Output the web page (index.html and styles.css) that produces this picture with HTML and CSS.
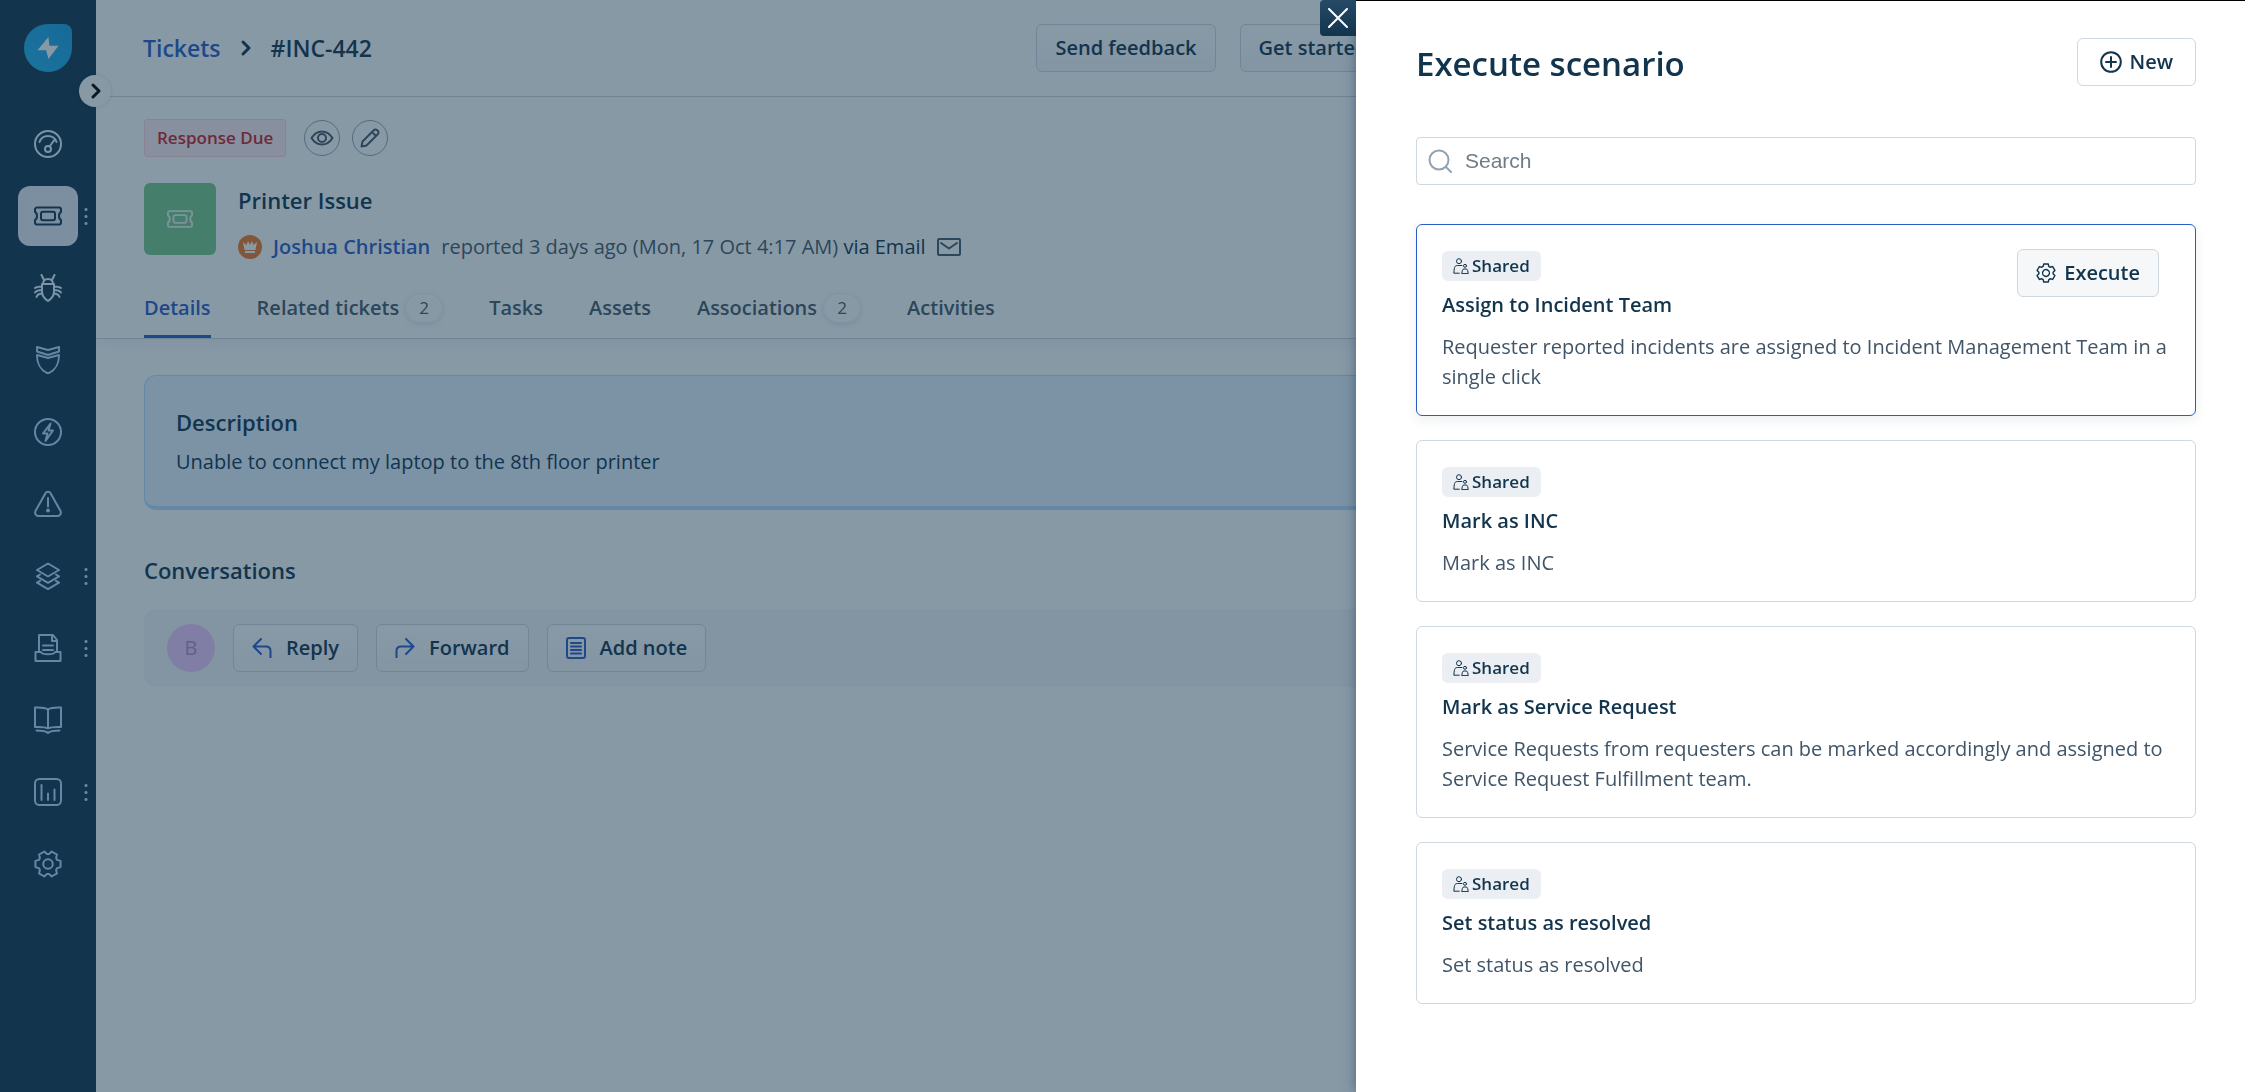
FILE: index.html
```html
<!DOCTYPE html>
<html lang="en">
<head>
<meta charset="utf-8">
<meta name="viewport" content="width=device-width, initial-scale=1">
<title>#INC-442 Printer Issue</title>
<link rel="stylesheet" href="styles.css">
</head>
<body>
<svg width="0" height="0" class="sprite" aria-hidden="true">
  <symbol id="i-ticket" viewBox="0 0 28 28"><path d="M3 5.500h22a2 2 0 0 1 2 2v2.500c-2.600 1-2.600 7 0 8v2.500a2 2 0 0 1-2 2H3a2 2 0 0 1-2-2V18c2.600-1 2.600-7 0-8V7.500a2 2 0 0 1 2-2z"/><rect x="7" y="9.800" width="14" height="8.400" rx="2"/></symbol>
  <symbol id="i-gear" viewBox="0 0 28 28"><path d="M26.600 10.900v6.200l-3.500 1-1 1.800.9 3.500-5.400 3.100-2.600-2.600h-2l-2.600 2.600L5 23.400l.9-3.500-1-1.800-3.500-1v-6.200l3.500-1 1-1.800L5 4.600l5.400-3.100L13 4.100h2l2.600-2.600L23 4.600l-.9 3.500 1 1.800z"/><circle cx="14" cy="14" r="4.800"/></symbol>
  <symbol id="i-shared" viewBox="0 0 16 16"><circle cx="6" cy="3.200" r="2.500"/><path d="M9 7.500H4.500c-2.200 0-3 1.500-3.200 3.200L.8 15.200h5.500"/><circle cx="12" cy="7.800" r="1.500"/><path d="M8.800 15.200l.6-2.900c.2-.9.800-1.300 1.600-1.300h2c.8 0 1.400.4 1.600 1.300l.6 2.900z"/></symbol>
</svg>

<div class="app">
  <aside class="sidebar">
    <a href="#" class="logo" aria-label="Home"><svg viewBox="0 0 24 26" width="22" height="24"><path d="M12.500 1L.5 15.500H10L12.500 25 23.500 10.500h-10z"/></svg></a>
    <button class="expand" aria-label="Expand menu"><svg width="12" height="16" viewBox="0 0 12 16"><path d="M4 2l6 6-6 6"/></svg></button>
    <nav class="nav" aria-label="Main">
      <a href="#" class="nav-item bright" aria-label="Dashboard"><svg viewBox="0 0 28 28"><circle cx="14" cy="14" r="13"/><path d="M5.500 12a9 9 0 0 1 17 0M20 10.500l-4.500 6"/><circle cx="14" cy="19" r="3"/></svg></a>
      <a href="#" class="nav-item active more" aria-label="Tickets"><svg><use href="#i-ticket"/></svg></a>
      <a href="#" class="nav-item bright" aria-label="Problems"><svg viewBox="0 0 28 28"><path d="M8 10h12v8c0 4-3 7-6 9-3-2-6-5-6-9zM9 10c0-3 2-5 5-5s5 2 5 5M10 6L7.500 1M18 6l2.500-5M8 12.500c-3 0-5 0-7 1.500M8 16c-3 0-5 0-7 2.500M8.500 19.500c-3 0-5 .5-6 3.500M20 12.500c3 0 5 0 7 1.500M20 16c3 0 5 0 7 2.500M19.500 19.500c3 0 5 .5 6 3.500"/></svg></a>
      <a href="#" class="nav-item" aria-label="Changes"><svg viewBox="0 0 28 28"><path d="M3 1l11 3 11-3v4.500L14 9 3 5.500zM3 9l11 3 11-3c0 10-3.500 15-11 18.500C6.500 24 3 19 3 9z"/></svg></a>
      <a href="#" class="nav-item" aria-label="Releases"><svg viewBox="0 0 28 28"><circle cx="14" cy="14" r="13"/><path d="M16.500 5.500l-7.500 10h4.500l-2 7.500L19 12.500h-4.500z"/></svg></a>
      <a href="#" class="nav-item" aria-label="Alerts"><svg viewBox="0 0 28 28"><path d="M11.300 3.500c1.200-2.200 4.200-2.200 5.400 0l9.700 17.300c1.300 2.300-.2 5.200-2.700 5.200H4.300c-2.500 0-4-2.900-2.700-5.200zM14 8v8.500"/><circle class="solid" cx="14" cy="20.500" r="1"/></svg></a>
      <a href="#" class="nav-item more" aria-label="Assets"><svg viewBox="0 0 28 28"><path d="M14 1.500L25 8l-11 6.500L3 8zM6 12.500L3 14.300l11 6.500 11-6.500-3-1.800M6 18.800l-3 1.800 11 6.500 11-6.500-3-1.800"/></svg></a>
      <a href="#" class="nav-item more" aria-label="Purchase orders"><svg viewBox="0 0 28 28"><path d="M5 17V1h14l4 5v11M18 1v6h5M9 11.500h10M9 16h10M1.500 18H7c1 3 13 3 14 0h5.500v9h-25z"/></svg></a>
      <a href="#" class="nav-item" aria-label="Solutions"><svg viewBox="0 0 28 28"><path d="M14 3.500C10.500 1 5 1.500 1 1.500V21c4 0 9.500-.5 13 1.500 3.500-2 9-1.500 13-1.500V1.500c-4 0-9.500-.5-13 2zM14 3.500v19M2.500 24.500c4 0 9 0 11.500 2.500 2.500-2.500 7.500-2.500 11.500-2.500"/></svg></a>
      <a href="#" class="nav-item more" aria-label="Analytics"><svg viewBox="0 0 28 28"><rect x="1" y="1" width="26" height="26" rx="4.500"/><path d="M7.500 7v15M14 15.500V22M20.500 11.500V22"/></svg></a>
      <a href="#" class="nav-item" aria-label="Admin"><svg><use href="#i-gear"/></svg></a>
    </nav>
  </aside>

  <main class="main">
    <header class="topbar">
      <nav class="crumbs" aria-label="Breadcrumb">
        <a href="#">Tickets</a>
        <svg width="12" height="18" viewBox="0 0 12 18"><path d="M3 3l6 6-6 6"/></svg>
        <span>#INC-442</span>
      </nav>
      <div class="top-actions">
        <button class="btn">Send feedback</button>
        <button class="btn">Get started</button>
      </div>
    </header>

    <section class="ticket-head">
      <div class="status-row">
        <span class="status">Response Due</span>
        <button class="round" aria-label="Watch"><svg width="24" height="24" viewBox="0 0 24 24"><path d="M1.500 12C4 8 7.500 5.500 12 5.500S20 8 22.500 12C20 16 16.500 18.500 12 18.500S4 16 1.500 12z"/><circle cx="12" cy="12" r="4"/></svg></button>
        <button class="round" aria-label="Edit"><svg width="20" height="20" viewBox="0 0 20 20"><path d="M1.500 18.500l1-5L14 2c2-2 6 2 4 4L6.500 17.500zM12 4l4 4"/></svg></button>
      </div>
      <div class="ticket">
        <div class="tile"><svg width="26" height="26"><use href="#i-ticket"/></svg></div>
        <div class="ticket-info">
          <h1>Printer Issue</h1>
          <div class="meta">
            <span class="vip"><svg width="14" height="12" viewBox="0 0 14 12"><path d="M0 1l3.500 3L5 0l2 4 2-4 1.500 4L14 1l-1.500 8h-11zM2 10h10v2H2z"/></svg></span>
            <a href="#">Joshua Christian</a>
            <span class="reported">reported 3 days ago (Mon, 17 Oct 4:17 AM) <span class="via">via Email</span></span>
            <svg class="mail" width="24" height="18" viewBox="0 0 24 18"><rect x="1" y="1" width="22" height="16" rx="1"/><path d="M4 5l8 5.500L20 5"/></svg>
          </div>
        </div>
      </div>
      <nav class="tabs" aria-label="Ticket sections">
        <a href="#" class="tab current">Details</a>
        <a href="#" class="tab">Related tickets <span class="count">2</span></a>
        <a href="#" class="tab">Tasks</a>
        <a href="#" class="tab">Assets</a>
        <a href="#" class="tab">Associations <span class="count">2</span></a>
        <a href="#" class="tab">Activities</a>
      </nav>
    </section>

    <div class="content">
      <section class="description">
        <h2>Description</h2>
        <p>Unable to connect my laptop to the 8th floor printer</p>
      </section>
      <h2 class="conv-title">Conversations</h2>
      <div class="composer">
        <span class="avatar">B</span>
        <button class="btn icon-btn"><svg width="20" height="20" viewBox="0 0 20 20"><path d="M9 1L1.500 8.500 9 16M1.500 8.500H14c3 0 4.500 1.500 4.500 4.500v6.500"/></svg>Reply</button>
        <button class="btn icon-btn"><svg width="20" height="20" viewBox="0 0 20 20"><path d="M11 1l7.500 7.500L11 16M18.500 8.500H6c-3 0-4.500 1.500-4.500 4.500v6.500"/></svg>Forward</button>
        <button class="btn icon-btn"><svg width="20" height="22" viewBox="0 0 20 22"><rect x="1" y="1" width="18" height="20" rx="2"/><path d="M5 6h10M5 9.500h10M5 13h10M5 16.500h10"/></svg>Add note</button>
      </div>
    </div>
  </main>
</div>

<div class="backdrop"></div>

<aside class="drawer" aria-label="Execute scenario">
  <button class="close" aria-label="Close"><svg width="20" height="20" viewBox="0 0 20 20"><path d="M1 1l18 18M19 1L1 19"/></svg></button>
  <header class="drawer-head">
    <h2>Execute scenario</h2>
    <button class="btn new"><svg width="22" height="22" viewBox="0 0 22 22"><circle cx="11" cy="11" r="9.800"/><path d="M11 6v10M6 11h10"/></svg>New</button>
  </header>
  <label class="search">
    <svg width="24" height="24" viewBox="0 0 24 24"><circle cx="11" cy="11" r="9.500"/><path d="M18 18l5 5"/></svg>
    <input type="text" placeholder="Search" aria-label="Search">
  </label>
  <ul class="scenarios">
    <li class="card selected">
      <span class="shared"><svg width="16" height="16"><use href="#i-shared"/></svg>Shared</span>
      <h3>Assign to Incident Team</h3>
      <p>Requester reported incidents are assigned to Incident Management Team in a single click</p>
      <button class="btn execute"><svg width="20" height="20" viewBox="0 0 28 28"><use href="#i-gear" width="28" height="28" transform="rotate(30 14 14)"/></svg>Execute</button>
    </li>
    <li class="card">
      <span class="shared"><svg width="16" height="16"><use href="#i-shared"/></svg>Shared</span>
      <h3>Mark as INC</h3>
      <p>Mark as INC</p>
    </li>
    <li class="card">
      <span class="shared"><svg width="16" height="16"><use href="#i-shared"/></svg>Shared</span>
      <h3>Mark as Service Request</h3>
      <p>Service Requests from requesters can be marked accordingly and assigned to Service Request Fulfillment team.</p>
    </li>
    <li class="card">
      <span class="shared"><svg width="16" height="16"><use href="#i-shared"/></svg>Shared</span>
      <h3>Set status as resolved</h3>
      <p>Set status as resolved</p>
    </li>
  </ul>
</aside>
</body>
</html>
```
FILE: styles.css
```css
:root {
  --ink: #12344d;
  --muted: #475867;
  --link: #2c5cc5;
  --line: #cfd7df;
}

* { box-sizing: border-box; }

body {
  margin: 0;
  font: 20px/30px "Open Sans", "Noto Sans", sans-serif;
  color: var(--ink);
  background: #fff;
}

h1, h2, h3, p, ul { margin: 0; padding: 0; }
ul { list-style: none; }
a { color: var(--link); text-decoration: none; }
button { font: inherit; color: inherit; cursor: pointer; }
svg { display: block; flex: none; fill: none; stroke: currentColor; stroke-width: 2; stroke-linejoin: round; stroke-linecap: round; }
.solid { fill: currentColor; }
.sprite { position: absolute; }

.app { display: flex; min-height: 100vh; overflow: hidden; }

/* Sidebar */
.sidebar {
  position: relative;
  flex: 0 0 96px;
  padding: 24px 18px;
  background: #12344d;
}
.logo {
  display: grid;
  place-items: center;
  width: 48px;
  height: 48px;
  margin: 0 6px 42px;
  border-radius: 50% 8px 50% 50%;
  background: linear-gradient(45deg, #24b4ee, #1c9fe0);
  color: #fff;
}
.logo svg { fill: currentColor; stroke: none; }
.expand {
  position: absolute;
  top: 75px;
  right: -15px;
  display: grid;
  place-items: center;
  width: 32px;
  height: 32px;
  padding: 0;
  border: 0;
  border-radius: 50%;
  background: #fff;
  color: #000;
  box-shadow: 0 0 4px rgba(0, 0, 0, .15);
}
.expand svg { stroke-width: 3; }
.nav { display: flex; flex-direction: column; gap: 12px; }
.nav-item {
  position: relative;
  display: grid;
  place-items: center;
  height: 60px;
  border-radius: 12px;
  color: #b4dafa;
}
.nav-item.bright { color: #e4f2ff; }
.nav-item svg { width: 28px; height: 28px; }
.nav-item.active { background: #e6eaf4; color: var(--ink); }
.more::after {
  content: "";
  position: absolute;
  right: -10px;
  width: 4px;
  height: 21px;
  background: radial-gradient(circle, #c4e0f8 1px, transparent 2px) 0 0 / 4px 7px;
}

/* Page header */
.main { flex: 1; min-width: 0; }
.topbar {
  display: grid;
  grid-template-columns: 10fr 13fr;
  padding: 24px 47px;
  border-bottom: 1px solid var(--line);
}
.crumbs { display: flex; align-items: center; gap: 19px; font-size: 23px; font-weight: 600; }
.crumbs svg { stroke-width: 3; }
.top-actions { display: flex; gap: 24px; }
.btn {
  display: inline-flex;
  align-items: center;
  justify-content: center;
  height: 48px;
  padding: 0 18px;
  border: 1px solid var(--line);
  border-radius: 6px;
  background: linear-gradient(#fff, #f5f7f9);
  font-weight: 600;
  white-space: nowrap;
}

/* Ticket summary */
.ticket-head {
  border-bottom: 1px solid var(--line);
  padding: 22px 48px 0;
  box-shadow: 0 6px 12px rgba(18, 52, 77, .06);
}
.status-row { display: flex; align-items: center; gap: 12px; }
.status {
  height: 38px;
  padding: 0 12px;
  margin-right: 6px;
  border: 1px solid #ffd0d6;
  border-radius: 3px;
  background: #ffecf0;
  color: #c82124;
  font-size: 17px;
  font-weight: 600;
  line-height: 36px;
}
.round {
  display: grid;
  place-items: center;
  width: 36px;
  height: 36px;
  padding: 0;
  border: 1px solid #92a2b1;
  border-radius: 50%;
  background: transparent;
  color: var(--muted);
}
.ticket { display: flex; gap: 22px; margin-top: 26px; }
.tile {
  display: grid;
  place-items: center;
  flex: none;
  width: 72px;
  height: 72px;
  border-radius: 6px;
  background: #7bc88a;
  color: #e4f5e9;
}
h1, h2 { font-size: 22px; font-weight: 600; line-height: 34px; }
.meta { display: flex; align-items: center; gap: 11px; margin-top: 15px; }
.vip {
  display: grid;
  place-items: center;
  width: 24px;
  height: 24px;
  border-radius: 50%;
  background: #f07827;
  color: #fff;
}
.vip svg { fill: currentColor; stroke: none; }
.meta a { font-weight: 600; }
.reported { color: var(--muted); }
.via { color: var(--ink); }
.mail { color: var(--muted); }
.tabs { display: flex; gap: 46px; margin-top: 18px; }
.tab {
  display: flex;
  align-items: center;
  gap: 6px;
  height: 58px;
  border-bottom: 3px solid transparent;
  color: var(--muted);
  font-weight: 600;
}
.tab.current { border-color: var(--link); color: var(--link); }
.count {
  width: 38px;
  height: 30px;
  border: 1px solid #ebeff3;
  border-radius: 15px;
  font-size: 17px;
  font-weight: 400;
  line-height: 28px;
  text-align: center;
  box-shadow: 0 2px 6px rgba(18, 52, 77, .12);
}

/* Ticket body */
.content { padding: 36px 48px; }
.description {
  padding: 29px 31px;
  border: 1px solid #b8dcff;
  border-bottom: 4px solid #b8dcff;
  border-radius: 12px;
  background: #e5f2fd;
}
.description p { margin-top: 8px; }
.conv-title { margin: 43px 0 22px; }
.composer {
  display: flex;
  align-items: center;
  gap: 18px;
  padding: 15px 23px;
  border-radius: 12px;
  background: #f5f7f9;
}
.avatar {
  width: 48px;
  border-radius: 50%;
  background: #efc8fb;
  color: #b888cc;
  font-weight: 500;
  line-height: 48px;
  text-align: center;
}
.icon-btn { gap: 14px; }
.icon-btn svg { color: var(--link); }

/* Dimming layer and drawer */
.backdrop { position: fixed; inset: 0; background: rgba(18, 52, 77, .5); }
.drawer {
  position: fixed;
  top: 0;
  right: 0;
  bottom: 0;
  width: 889px;
  max-width: 100%;
  padding: 37px 49px 0 60px;
  border-top: 1px solid #000;
  background: #fff;
  box-shadow: 0 0 12px rgba(18, 52, 77, .5);
}
.close {
  position: absolute;
  top: -1px;
  right: 100%;
  display: grid;
  place-items: center;
  width: 36px;
  height: 36px;
  padding: 0;
  border: 0;
  border-radius: 4px 0 0 4px;
  background: linear-gradient(#264966, #12344d);
  color: #fff;
}
.drawer-head { display: flex; justify-content: space-between; align-items: flex-start; }
.drawer-head h2 { font-size: 33px; line-height: 52px; }
.new { gap: 8px; padding: 0 22px; background: #fff; }
.search {
  display: flex;
  align-items: center;
  gap: 11px;
  height: 48px;
  margin: 47px 0 39px;
  padding: 0 11px;
  border: 1px solid var(--line);
  border-radius: 4px;
  color: #92a2b1;
}
.search input {
  flex: 1;
  min-width: 0;
  border: 0;
  outline: 0;
  background: none;
  color: var(--ink);
  font: 21px/30px "Liberation Sans", Arial, sans-serif;
}
.search input::placeholder { color: #6f7c87; }
.scenarios { display: grid; gap: 24px; }
.card {
  position: relative;
  padding: 26px 25px 23px;
  border: 1px solid var(--line);
  border-radius: 6px;
}
.card.selected { border-color: var(--link); box-shadow: 0 4px 12px rgba(18, 52, 77, .08); }
.shared {
  display: flex;
  align-items: center;
  gap: 3px;
  width: max-content;
  height: 30px;
  padding: 0 11px;
  border-radius: 6px;
  background: #ebeff3;
  font-size: 17px;
  font-weight: 600;
}
.shared svg { stroke-width: 1; }
.card h3 { margin-top: 9px; font-size: 20px; font-weight: 600; line-height: 30px; }
.card p { margin-top: 12px; color: #405568; }
.execute { position: absolute; top: 24px; right: 36px; gap: 8px; background: #f5f7f9; }
```
